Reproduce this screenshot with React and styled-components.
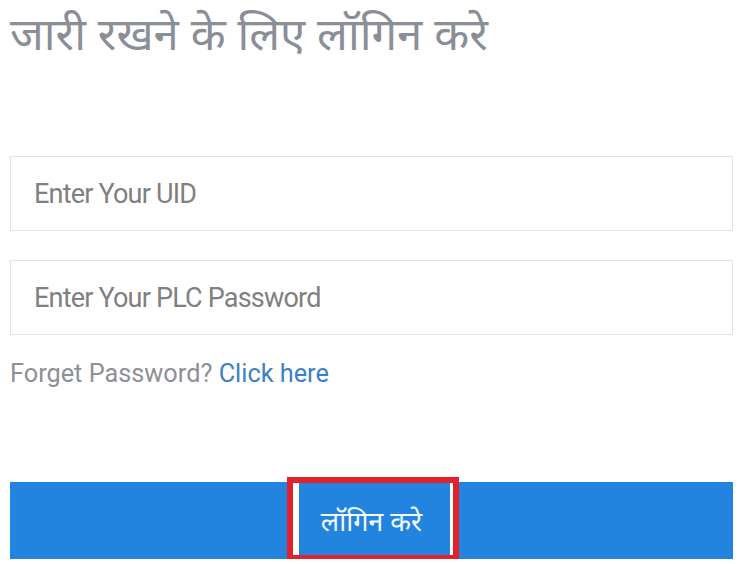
import styled, { createGlobalStyle } from "styled-components";

const Global = createGlobalStyle`
  html, body {
    margin: 0;
    padding: 0;
    background: #ffffff;
  }
`;

const Page = styled.div`
  display: flex;
  flex-direction: column;
  padding: 0 8px 0 10px;
  font-family: Roboto, "Noto Sans", "Liberation Sans", sans-serif;
`;

const Title = styled.h1`
  margin: 1px 0 0 0;
  font-weight: 400;
  font-size: 45.5px;
  line-height: 63px;
  color: #898e97;
  font-family: "Noto Sans", "Noto Sans Devanagari", sans-serif;
`;

const Field = styled.input`
  box-sizing: border-box;
  width: 100%;
  height: 75px;
  margin-top: ${(p) => p.$top}px;
  border: 1px solid #e2e2e2;
  padding: 0 0 0 23px;
  font-family: Roboto, "Liberation Sans", sans-serif;
  font-size: 27px;
  letter-spacing: -0.8px;
  color: #333;
  outline: none;
  &::placeholder {
    color: #808080;
  }
`;

const Forgot = styled.p`
  margin: 24px 0 0 0;
  font-size: 25.3px;
  line-height: 30px;
  color: #8d9096;
`;

const Link = styled.a`
  color: #3c80c8;
  text-decoration: none;
`;

const ButtonRow = styled.div`
  position: relative;
  margin-top: 93px;
`;

const LoginButton = styled.button`
  width: 100%;
  height: 77px;
  border: none;
  background: #2284de;
  color: #f4fbff;
  font-size: 27px;
  font-family: "Noto Sans", "Noto Sans Devanagari", sans-serif;
  padding: 0;
`;

const Highlight = styled.div`
  position: absolute;
  left: 277px;
  top: -5px;
  width: 160px;
  height: 72px;
  border: 6px solid #e2212c;
  pointer-events: none;
  &::before,
  &::after {
    content: "";
    position: absolute;
    top: 0;
    bottom: 0;
    background: #ffffff;
  }
  &::before {
    left: 0;
    width: 6px;
  }
  &::after {
    right: 0;
    width: 3px;
  }
`;

export default function App() {
  return (
    <>
      <Global />
      <Page>
        <Title>जारी रखने के लिए लॉगिन करे</Title>
        <Field $top={92} placeholder="Enter Your UID" />
        <Field $top={29} type="password" placeholder="Enter Your PLC Password" />
        <Forgot>
          Forget Password? <Link href="#">Click here</Link>
        </Forgot>
        <ButtonRow>
          <LoginButton>लॉगिन करे</LoginButton>
          <Highlight />
        </ButtonRow>
      </Page>
    </>
  );
}
